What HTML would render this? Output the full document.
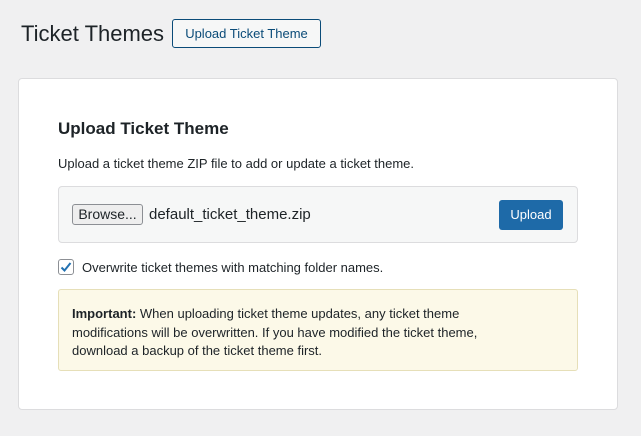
<!DOCTYPE html>
<html><head><style>
body{margin:0;width:641px;height:436px;background:#f0f0f1;font-family:"Liberation Sans",sans-serif;color:#1d2327;position:relative;overflow:hidden}
.abs{position:absolute}
h1{position:absolute;left:21px;top:19px;margin:0;font-size:22px;font-weight:400;line-height:30px}
.hbtn{left:172px;top:19px;width:149px;height:29px;border:1px solid #0a4b78;border-radius:3px;color:#0a4b78;font-size:13px;line-height:27px;text-align:center;background:#f6f7f7;box-sizing:border-box}
.card{left:18px;top:78px;width:600px;height:332px;background:#fff;border:1px solid #dcdcde;border-radius:4px;box-sizing:border-box}
h2{position:absolute;left:58px;top:119px;margin:0;font-size:17px;font-weight:700}
.p{left:58px;top:156px;font-size:13px}
.box{left:58px;top:186px;width:520px;height:57px;background:#f6f7f7;border:1px solid #dcdcde;border-radius:4px;box-sizing:border-box}
.browse{left:72px;top:204px;width:71px;height:21px;border:1px solid #8c8f94;border-radius:3px;background:#eee;box-sizing:border-box;font-size:14px;line-height:19px;text-align:center}
.fn{left:149px;top:206px;font-size:15px}
.up{left:499px;top:200px;width:64px;height:30px;background:#1e6aa8;border-radius:3px;color:#fff;font-size:13px;line-height:30px;text-align:center}
.cb{left:58px;top:259px;width:16px;height:16px;border:1px solid #8c8f94;border-radius:3px;box-sizing:border-box;background:#fff}
.cbl{left:82px;top:260px;font-size:13px}
.note{left:58px;top:289px;width:520px;height:82px;background:#fcf9e8;border:1px solid #e6dfb8;border-radius:3px;box-sizing:border-box;padding:15px 13px;font-size:13px;line-height:18.5px;white-space:nowrap}
</style></head><body>
<h1>Ticket Themes</h1>
<div class="abs hbtn">Upload Ticket Theme</div>
<div class="abs card"></div>
<h2>Upload Ticket Theme</h2>
<div class="abs p">Upload a ticket theme ZIP file to add or update a ticket theme.</div>
<div class="abs box"></div>
<div class="abs browse">Browse...</div>
<div class="abs fn">default_ticket_theme.zip</div>
<div class="abs up">Upload</div>
<div class="abs cb"><svg width="14" height="14" viewBox="0 0 14 14"><path d="M2.5 7.5l3 3 6-7.5" fill="none" stroke="#2271b1" stroke-width="2"/></svg></div>
<div class="abs cbl">Overwrite ticket themes with matching folder names.</div>
<div class="abs note"><b>Important:</b> When uploading ticket theme updates, any ticket theme<br>modifications will be overwritten. If you have modified the ticket theme,<br>download a backup of the ticket theme first.</div>
</body></html>
